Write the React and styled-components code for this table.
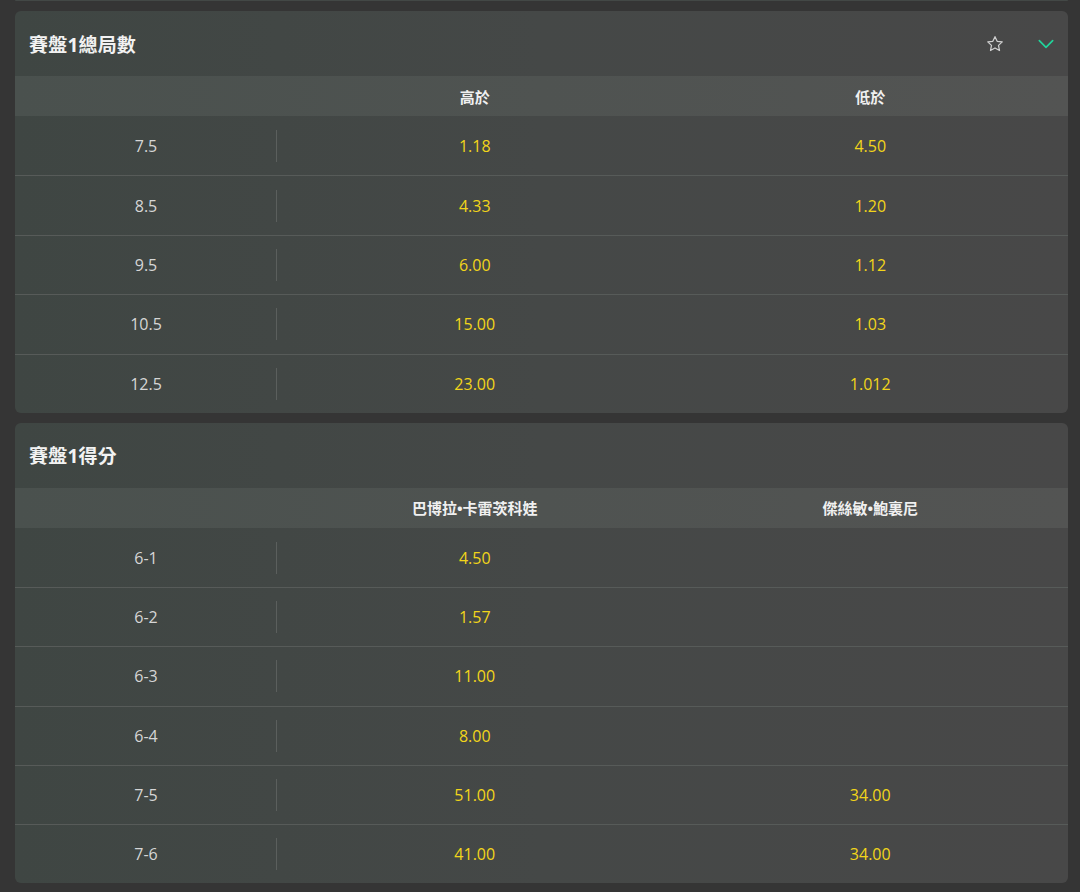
import React from "react";
import styled, { createGlobalStyle } from "styled-components";

const Global = createGlobalStyle`
  html, body { margin: 0; padding: 0; background: #353535; }
  body { font-family: "Open Sans", "Noto Sans CJK TC", sans-serif; }
  * { box-sizing: border-box; }
`;

const Page = styled.div`
  display: flex;
  flex-direction: column;
  gap: 10px;
  padding: 0 12px 10px 15px;
  min-height: 892px;
  background: #353535;
`;

const Stub = styled.div`
  height: 1px;
  background: #434846;
  border-radius: 0 0 6px 6px;
`;

const Card = styled.section`
  border-radius: 6px;
  overflow: hidden;
  background: linear-gradient(90deg, #3f4643 0%, #454847 50%, #484848 100%);
`;

const Header = styled.div`
  height: 65px;
  display: flex;
  align-items: center;
  padding: 0 10px 0 14px;
`;

const Title = styled.h2`
  margin: 0;
  flex: 1;
  font-family: "Open Sans", "Noto Sans CJK TC", sans-serif;
  font-size: 19px;
  font-weight: 700;
  color: #f2f2f2;
  letter-spacing: 0.2px;
`;

const IconBtn = styled.span`
  display: inline-flex;
  align-items: center;
  justify-content: center;
  width: 24px;
  height: 24px;
  margin-left: ${(p) => p.$gap || 0}px;
`;

const Grid = styled.div`
  display: grid;
  grid-template-columns: 262px 1fr 1fr;
  align-items: center;
`;

const HeadRow = styled(Grid)`
  height: 40px;
  background: linear-gradient(90deg, #4a514e 0%, #4f5351 50%, #535453 100%);
`;

const HeadCell = styled.div`
  text-align: center;
  font-family: "Open Sans", "Noto Sans CJK TC", sans-serif;
  font-size: 15px;
  font-weight: 700;
  color: #f0f0f0;
`;

const Row = styled(Grid)`
  height: ${(p) => p.$h}px;
  border-top: ${(p) => (p.$first ? "none" : "1px solid #575b59")};
`;

const Label = styled.div`
  position: relative;
  height: 100%;
  display: flex;
  align-items: center;
  justify-content: center;
  font-size: 16px;
  color: #d6d6d6;
  &::after {
    content: "";
    position: absolute;
    right: 0;
    top: 50%;
    transform: translateY(-50%);
    height: 32px;
    width: 1px;
    background: #5b5f5d;
  }
`;

const Odd = styled.div`
  text-align: center;
  font-size: 16px;
  color: #f2d51a;
`;

const Star = () => (
  <svg width="20" height="20" viewBox="0 0 24 24" fill="none" stroke="#cfcfcf" strokeWidth="1.5" strokeLinejoin="round">
    <path d="M12 3.2l2.6 5.6 6.1.7-4.5 4.2 1.2 6.1L12 16.8l-5.4 3 1.2-6.1-4.5-4.2 6.1-.7z" />
  </svg>
);

const Chevron = () => (
  <svg width="20" height="20" viewBox="0 0 24 24" fill="none" stroke="#21d39a" strokeWidth="2" strokeLinecap="round" strokeLinejoin="round">
    <path d="M4 8l8 8 8-8" />
  </svg>
);

const Market = ({ title, heads, rows, rowH, icons }) => (
  <Card>
    <Header>
      <Title>{title}</Title>
      {icons && (
        <>
          <IconBtn><Star /></IconBtn>
          <IconBtn $gap={27}><Chevron /></IconBtn>
        </>
      )}
    </Header>
    <HeadRow>
      <HeadCell />
      <HeadCell>{heads[0]}</HeadCell>
      <HeadCell>{heads[1]}</HeadCell>
    </HeadRow>
    {rows.map((r, i) => (
      <Row key={r[0]} $first={i === 0} $h={rowH}>
        <Label>{r[0]}</Label>
        <Odd>{r[1]}</Odd>
        <Odd>{r[2]}</Odd>
      </Row>
    ))}
  </Card>
);

export default function App() {
  return (
    <>
      <Global />
      <Page>
        <Stub />
        <Market
          title="賽盤1總局數"
          icons
          heads={["高於", "低於"]}
          rowH={59.4}
          rows={[
            ["7.5", "1.18", "4.50"],
            ["8.5", "4.33", "1.20"],
            ["9.5", "6.00", "1.12"],
            ["10.5", "15.00", "1.03"],
            ["12.5", "23.00", "1.012"],
          ]}
        />
        <Market
          title="賽盤1得分"
          heads={["巴博拉•卡雷茨科娃", "傑絲敏•鮑裏尼"]}
          rowH={59.2}
          rows={[
            ["6-1", "4.50", ""],
            ["6-2", "1.57", ""],
            ["6-3", "11.00", ""],
            ["6-4", "8.00", ""],
            ["7-5", "51.00", "34.00"],
            ["7-6", "41.00", "34.00"],
          ]}
        />
      </Page>
    </>
  );
}
